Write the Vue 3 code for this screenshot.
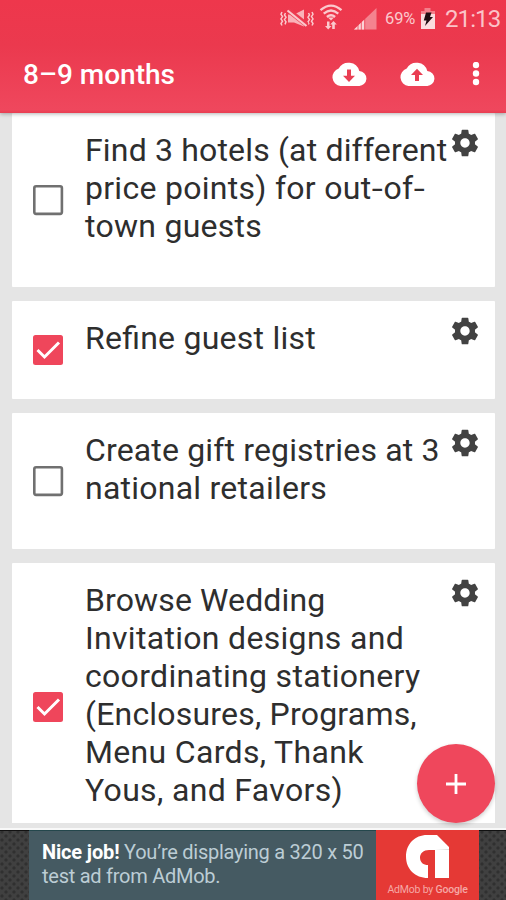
<script setup>
const tasks = [
  {
    done: false,
    lines: [
      { text: 'Find 3 hotels (at different', track: 0.17 },
      { text: 'price points) for out-of-', track: 0.28 },
      { text: 'town guests', track: 0.27 },
    ],
  },
  { done: true, lines: [{ text: 'Refine guest list', track: 0.24 }] },
  {
    done: false,
    lines: [
      { text: 'Create gift registries at 3', track: 0.15 },
      { text: 'national retailers', track: 0.24 },
    ],
  },
  {
    done: true,
    lines: [
      { text: 'Browse Wedding', track: 0.12 },
      { text: 'Invitation designs and', track: 0.31 },
      { text: 'coordinating stationery', track: 0.31 },
      { text: '(Enclosures, Programs,', track: 0.2 },
      { text: 'Menu Cards, Thank', track: 0.33 },
      { text: 'Yous, and Favors)', track: 0.34 },
    ],
  },
]

const pieces = (text) => text.split(/(-)/).filter(Boolean)
</script>

<template>
  <div class="screen">
    <header class="top">
      <div class="status">
        <svg class="mute" viewBox="0 0 34 20" width="34" height="20">
          <g fill="none" stroke="currentColor" stroke-width="1.500">
            <path d="M2 4l-1 2.300 1.500 2.300-1.500 2.300 1.500 2.300-1.500 2.300 1 2M5.500 5l-1 2 1.500 2.300-1.500 2.300 1.500 2.300-1 2.500M28.500 5l1 2-1.500 2.300 1.500 2.300-1.500 2.300 1 2.500M32 4l1 2.300-1.500 2.300 1.500 2.300-1.500 2.300 1.500 2.300-1 2" />
          </g>
          <path d="M8 6.500h6v8H8zM14 6.500l10-5v17l-10-4z" fill="currentColor" opacity=".85" />
          <path d="M8 2l19 15" stroke="#ec3c50" stroke-width="5" />
          <path d="M7.500 2.500l19 15.500" stroke="currentColor" stroke-width="2.200" />
        </svg>
        <svg class="wifi" viewBox="0 0 24 26" width="24" height="26">
          <g fill="none" stroke="currentColor" stroke-width="2.300">
            <path d="M1.500 6.200Q12-3 22.500 6.200M4.700 9.700Q12 3.300 19.300 9.700M7.900 13Q12 9.600 16.100 13" />
          </g>
          <path d="M9 13.500h6l-3 3z" fill="currentColor" />
          <path d="M8 17.500h2.500V22h2l-3.300 3.500L6 22h2zM13.200 25v-4.500h-2l3.300-3.500 3.300 3.500h-2V25z" fill="currentColor" />
        </svg>
        <svg class="signal" viewBox="0 0 24 22" width="24" height="22">
          <path d="M23.500 0v21.500H1z" fill="#f4838f" />
          <path d="M11.500 11.500v10H1z" fill="#fbd3d6" />
          <path d="M5 17v5M8.300 14v8M11.700 11v11" stroke="#ec4054" stroke-width=".8" />
        </svg>
        <span class="percent">69%</span>
        <svg class="battery" viewBox="0 0 16 21" width="16" height="21">
          <path d="M4.500 0h6v3H15v18H1V3h3.500z" fill="#f47f8b" />
          <path d="M1 6h14v15H1z" fill="#fbdcdf" />
          <path d="M6 4.500h5.500L10 9h3L5 18l1.500-5.500H3.800z" fill="#210c12" />
        </svg>
        <span class="clock">21:13</span>
      </div>
      <div class="bar">
        <h1>8–9 months</h1>
        <svg class="cloud" viewBox="0 0 36 24" width="36" height="24">
          <path d="M28.300 9A11.200 11.200 0 0 0 7.700 6.500 9 9 0 0 0 9.500 24H27.500A7.500 7.500 0 0 0 28.300 9z" fill="#fff" />
          <path d="M16 7.500h4v6.200h4L18 20l-6-6.300h4z" fill="#ea3e53" />
        </svg>
        <svg class="cloud second" viewBox="0 0 36 24" width="36" height="24">
          <path d="M28.300 9A11.200 11.200 0 0 0 7.700 6.500 9 9 0 0 0 9.500 24H27.500A7.500 7.500 0 0 0 28.300 9z" fill="#fff" />
          <path d="M16 19h4v-6h4L18 6.700 12 13h4z" fill="#ea3e53" />
        </svg>
        <svg class="more" viewBox="0 0 8 24" width="8" height="24">
          <g fill="#fff"><circle cx="4" cy="3" r="3.200" /><circle cx="4" cy="11.500" r="3.200" /><circle cx="4" cy="20" r="3.200" /></g>
        </svg>
      </div>
    </header>

    <main class="list">
      <article v-for="(task, i) in tasks" :key="i" class="card">
        <svg class="box" viewBox="0 0 30 30" width="30" height="30">
          <template v-if="task.done">
            <rect width="30" height="30" rx="2.500" fill="#ef465b" />
            <path d="M4.500 15l7 7L26 7.500" fill="none" stroke="#fff" stroke-width="3" />
          </template>
          <rect v-else x="1.300" y="1.300" width="27.600" height="27.600" rx="1.800" fill="none" stroke="#707070" stroke-width="2.600" />
        </svg>
        <p class="text">
          <span v-for="line in task.lines" :key="line.text" class="line" :style="{ letterSpacing: line.track + 'px' }"><span v-for="(piece, n) in pieces(line.text)" :key="n" :class="{ hyphen: piece === '-' }">{{ piece }}</span></span>
        </p>
        <svg class="gear" viewBox="0 0 24 24" width="32" height="32">
          <path d="M19.430 12.980c.04-.32.07-.64.07-.98s-.03-.66-.07-.98l2.110-1.650c.19-.15.24-.42.12-.64l-2-3.460c-.12-.22-.39-.3-.61-.22l-2.490 1c-.52-.4-1.080-.73-1.690-.98l-.38-2.650C14.460 2.180 14.250 2 14 2h-4c-.25 0-.46.18-.49.42l-.38 2.650c-.61.25-1.170.59-1.690.98l-2.490-1c-.23-.09-.49 0-.61.22l-2 3.460c-.13.22-.07.49.12.64l2.110 1.650c-.04.32-.07.65-.07.98s.03.66.07.98l-2.110 1.650c-.19.15-.24.42-.12.64l2 3.460c.12.22.39.3.61.22l2.490-1c.52.4 1.080.73 1.690.98l.38 2.650c.03.24.24.42.49.42h4c.25 0 .46-.18.49-.42l.38-2.650c.61-.25 1.170-.59 1.690-.98l2.490 1c.23.09.49 0 .61-.22l2-3.460c.12-.22.07-.49-.12-.64l-2.110-1.650zM12 15.500c-1.930 0-3.500-1.570-3.500-3.500s1.570-3.500 3.500-3.500 3.500 1.570 3.500 3.500-1.570 3.500-3.500 3.500z" fill="#424242" />
        </svg>
      </article>
    </main>

    <button class="fab" aria-label="Add task">
      <svg viewBox="0 0 20 20" width="20" height="20"><path d="M10 0v20M0 10h20" stroke="#fff" stroke-width="2.800" /></svg>
    </button>

    <footer class="ad">
      <div class="message">
        <span class="row"><b>Nice job!</b> You’re displaying a 320 x 50</span>
        <span class="row">test ad from AdMob.</span>
      </div>
      <div class="brand">
        <svg viewBox="0 0 43 43" width="43" height="43">
          <path d="M21 0H31L43 12V43H29V15H23C17.500 15 14 18.500 14 22.500C14 27.500 17.500 30 22 30V43C9 43 0 34 0 21.500C0 9 9 0 21 0z" fill="#fff" />
          <path d="M29 15h14v-1z" fill="#ddd" />
        </svg>
        <span>AdMob by <b>Google</b></span>
      </div>
    </footer>
  </div>
</template>

<style>
body { margin: 0; }
</style>

<style scoped>
.screen {
  position: relative;
  width: 506px;
  height: 900px;
  overflow: hidden;
  display: flex;
  flex-direction: column;
  background: #e5e5e5;
  font-family: Roboto, sans-serif;
}
.top {
  flex: none;
  height: 113px;
  box-sizing: border-box;
  background: linear-gradient(#ee374c 0%, #eb394e 40%, #ef475d 97%, #e83d51 100%);
  box-shadow: 0 1px 4px rgba(0, 0, 0, .3);
  z-index: 1;
}
.status {
  height: 37px;
  display: flex;
  align-items: center;
  color: #fbc9cd;
  padding-left: 280px;
  box-sizing: border-box;
}
.status svg { flex: none; }
.mute { margin-top: -2px; }
.wifi { margin: -3px 0 0 5px; }
.signal { margin: 1px 0 0 10px; }
.percent { margin-left: 8px; width: 35px; font-size: 16.500px; letter-spacing: -.1px; white-space: nowrap; }
.battery { margin: 0 0 1px 0; }
.clock { margin-left: 9px; font-size: 24px; letter-spacing: -.9px; color: #fbc3c8; }
.bar { display: flex; align-items: center; height: 75px; padding-left: 23px; }
h1 { margin: 0; width: 308px; font-size: 28px; font-weight: 500; color: #fff; line-height: 32px; white-space: nowrap; }
.cloud { flex: none; margin-top: -2px; }
.second { margin-left: 32px; }
.more { margin: -2px 0 0 37px; }
.list {
  flex: none;
  height: 710px;
  overflow: hidden;
  display: flex;
  flex-direction: column;
  gap: 14px;
  padding: 0 11px 0 12px;
}
.card {
  flex: none;
  display: flex;
  box-sizing: border-box;
  padding: 18px 14px 42px 21px;
  background: #fff;
  border-radius: 1px;
}
.box {
  flex: none;
  align-self: center;
  margin: 12px 0 -12px;
  overflow: visible;
}
.text {
  flex: 1;
  margin: 0 0 0 22px;
  font-size: 32px;
  line-height: 38px;
  color: #2e2e2e;
  font-feature-settings: "liga" 1;
}
.line { display: block; white-space: nowrap; }
.hyphen { display: inline-block; margin: 0 1.500px; transform: scaleX(1.25); }
.gear { flex: none; margin: -4px 0 -10px; }
.fab {
  position: absolute;
  left: 417px;
  top: 744px;
  width: 78px;
  height: 79px;
  padding: 0;
  border: 0;
  border-radius: 50%;
  background: #ef475c;
  box-shadow: 0 2px 4px rgba(0, 0, 0, .2);
  display: flex;
  align-items: center;
  justify-content: center;
  z-index: 2;
}
.ad {
  height: 72px;
  margin-top: 5px;
  flex: none;
  display: flex;
  box-sizing: border-box;
  border-top: 2px solid #f8f8f8;
  padding: 0 27px 0 29px;
  background: linear-gradient(#111 0 1px, transparent 1px),
    radial-gradient(circle at 2px 2px, #303030 1px, transparent 2.200px) 0 0 / 8px 8px,
    radial-gradient(circle at 6px 6px, #303030 1px, transparent 2.200px) 0 0 / 8px 8px, #404040;
}
.message {
  width: 347px;
  box-sizing: border-box;
  padding: 9px 0 0 13px;
  background: #455a62;
  border-top: 1px solid #24474c;
  color: #bccdd5;
  font-size: 20px;
  line-height: 24px;
  letter-spacing: -.26px;
}
.row { display: block; white-space: nowrap; }
.message b { color: #fff; letter-spacing: -.15px; }
.brand {
  flex: 1;
  display: flex;
  flex-direction: column;
  align-items: center;
  padding-top: 5px;
  background: #e53935;
}
.brand span { margin-top: 4px; font-size: 10.500px; letter-spacing: -.2px; line-height: 15px; color: #f5a8a5; white-space: nowrap; }
.brand b { font-weight: 500; }
</style>
